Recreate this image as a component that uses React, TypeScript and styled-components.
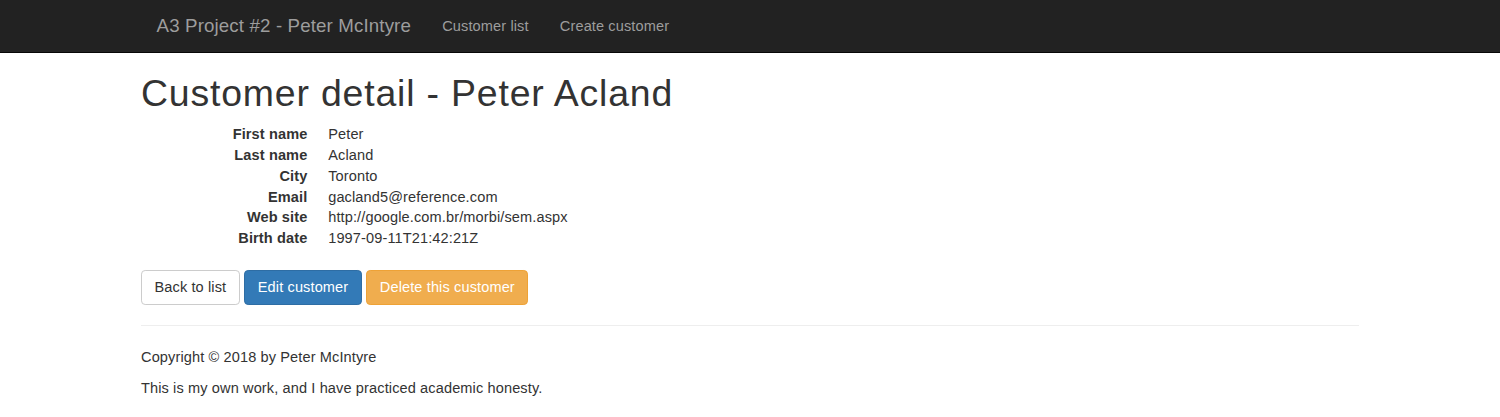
import React from "react";
import styled, { createGlobalStyle } from "styled-components";

const GlobalStyle = createGlobalStyle`
  html, body { margin: 0; padding: 0; background: #fff; }
  body {
    font-family: "Liberation Sans", Arial, sans-serif;
    font-size: 14.56px;
    line-height: 20.8px;
    letter-spacing: 0.12px;
    color: #333;
  }
  * { box-sizing: border-box; }
`;

const Navbar = styled.nav`
  background: #222;
  border-bottom: 1px solid #080808;
  min-height: 52px;
  margin-bottom: 19.6px;
`;

const Container = styled.div`
  max-width: 1248px;
  margin: 0 auto;
  padding: 0 15px;
`;

const NavInner = styled.div`
  display: flex;
  align-items: center;
`;

const Brand = styled.a`
  display: block;
  padding: 15.6px 15.6px;
  height: 51px;
  font-size: 18.72px;
  line-height: 20.8px;
  letter-spacing: 0.13px;
  color: #9d9d9d;
  text-decoration: none;
`;

const NavList = styled.ul`
  display: flex;
  list-style: none;
  margin: 0;
  padding: 0;
`;

const NavLink = styled.a`
  display: block;
  padding: 15.6px 15.6px;
  line-height: 20.8px;
  color: #9d9d9d;
  text-decoration: none;
`;

const Title = styled.h1`
  font-size: 37.44px;
  font-weight: 500;
  line-height: 1.1;
  letter-spacing: 0.82px;
  margin: 19.6px 0 10.4px;
  color: #333;
`;

const DetailList = styled.dl`
  display: grid;
  grid-template-columns: 166.4px 1fr;
  column-gap: 20.8px;
  margin: 0 0 20.8px;
`;

const Term = styled.dt`
  font-weight: 700;
  text-align: right;
  white-space: nowrap;
`;

const Desc = styled.dd`
  margin: 0;
`;

const ButtonRow = styled.div`
  display: flex;
  gap: 4.6px;
`;

const variants = {
  default: { bg: "#fff", border: "#ccc", color: "#333" },
  primary: { bg: "#337ab7", border: "#2e6da4", color: "#fff" },
  warning: { bg: "#f0ad4e", border: "#eea236", color: "#fff" },
};

const Button = styled.a<{ $variant: keyof typeof variants }>`
  display: inline-block;
  padding: 6.24px 12.48px;
  font-size: 14.56px;
  line-height: 20.8px;
  border-radius: 4.16px;
  border: 1px solid ${(p) => variants[p.$variant].border};
  background: ${(p) => variants[p.$variant].bg};
  color: ${(p) => variants[p.$variant].color};
  text-decoration: none;
  white-space: nowrap;
`;

const Rule = styled.hr`
  margin: 20px 0 20.8px;
  border: 0;
  border-top: 1px solid #eee;
`;

const Para = styled.p`
  margin: 0 0 10.4px;
`;

export default function App() {
  const rows: [string, string][] = [
    ["First name", "Peter"],
    ["Last name", "Acland"],
    ["City", "Toronto"],
    ["Email", "gacland5@reference.com"],
    ["Web site", "http://google.com.br/morbi/sem.aspx"],
    ["Birth date", "1997-09-11T21:42:21Z"],
  ];
  return (
    <>
      <GlobalStyle />
      <Navbar>
        <Container>
          <NavInner>
            <Brand href="#">A3 Project #2 - Peter McIntyre</Brand>
            <NavList>
              <li><NavLink href="#">Customer list</NavLink></li>
              <li><NavLink href="#">Create customer</NavLink></li>
            </NavList>
          </NavInner>
        </Container>
      </Navbar>
      <Container>
        <Title>Customer detail - Peter Acland</Title>
        <DetailList>
          {rows.map(([k, v]) => (
            <React.Fragment key={k}>
              <Term>{k}</Term>
              <Desc>{v}</Desc>
            </React.Fragment>
          ))}
        </DetailList>
        <ButtonRow>
          <Button $variant="default" href="#">Back to list</Button>
          <Button $variant="primary" href="#">Edit customer</Button>
          <Button $variant="warning" href="#">Delete this customer</Button>
        </ButtonRow>
        <Rule />
        <footer>
          <Para>Copyright © 2018 by Peter McIntyre</Para>
          <Para>This is my own work, and I have practiced academic honesty.</Para>
        </footer>
      </Container>
    </>
  );
}
